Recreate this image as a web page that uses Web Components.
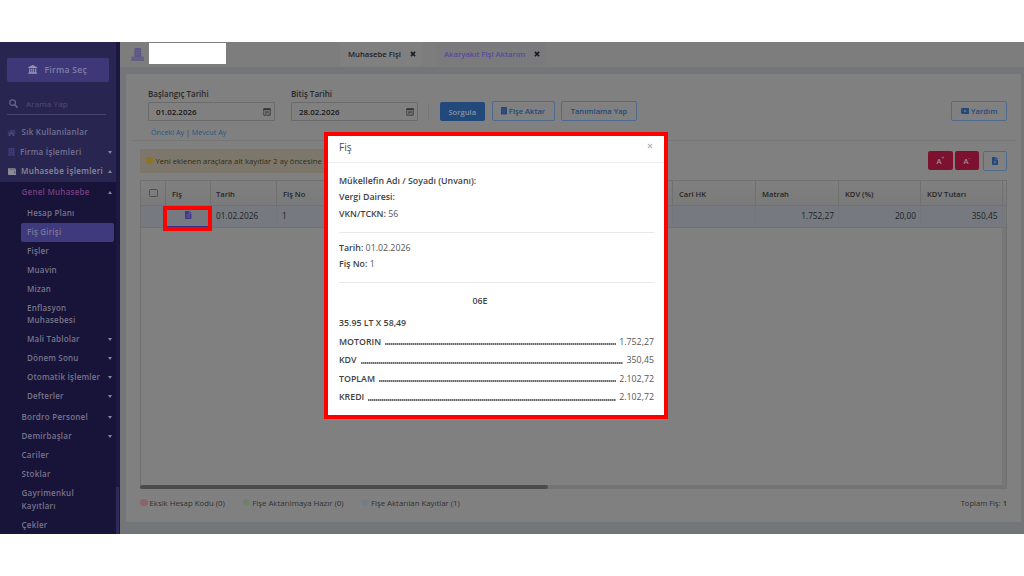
<!DOCTYPE html>
<html lang="tr">
<head>
<meta charset="utf-8">
<title>Akaryakıt Fişi Aktarım</title>
<style>
    * { box-sizing: border-box; }
    body {
        margin: 0;
        width: 1024px;
        height: 576px;
        overflow: hidden;
        background: #fff;
        font-family: "Open Sans", "Noto Sans", sans-serif;
        font-size: 7.5px;
        color: #262626;
    }
</style>
</head>
<body>
<fis-app></fis-app>

<script>
// Registers an element whose markup may depend on its attributes
function define(tag, render) {
    customElements.define(tag, class extends HTMLElement {
        constructor() {
            super();
            this.attachShadow({ mode: 'open' });
        }

        connectedCallback() {
            const template = document.createElement('template');
            template.innerHTML = '<style>* { box-sizing: border-box; }</style>' + render(this);
            this.shadowRoot.replaceChildren(template.content.cloneNode(true));
        }
    });
}

const icons = {
    bank: ['0 0 16 16', '<path d="M8 0 15.5 3.6V5H.5V3.6zM2 6h2v6h1.6V6h1.8v6h1.2V6h1.8v6H12V6h2v6h.7v1.3H1.3V12H2zM.4 14h15.2v1.6H.4z"/>'],
    search: ['0 0 16 16', '<circle cx="6.4" cy="6.4" r="5" fill="none" stroke="currentColor" stroke-width="2.2"/><path d="m10 10 5 5" stroke="currentColor" stroke-width="2.8" stroke-linecap="round"/>'],
    home: ['0 0 18 16', '<path d="m9 1 8.6 7.4-1.1 1.2L9 3.3 1.5 9.6.4 8.4zM13 1.6h2.2v4.2L13 4zM9 4.8l6 5V15h-4.3v-4H7.3v4H3V9.8z"/>'],
    building: ['0 0 14 16', '<path fill-rule="evenodd" d="M1 0h12v16H8.5v-3h-3v3H1zM3.5 2.5v1.8h2V2.5zM8.5 2.5v1.8h2V2.5zM3.5 6v1.8h2V6zM8.5 6v1.8h2V6zM3.5 9.5v1.8h2V9.5zM8.5 9.5v1.8h2V9.5z"/>'],
    wallet: ['0 0 16 14', '<path fill-rule="evenodd" d="M2 0h12v1.5H2.2v1H15a1 1 0 0 1 1 1V13a1 1 0 0 1-1 1H1.5A1.5 1.5 0 0 1 0 12.5V2a2 2 0 0 1 2-2zM12.8 7.2a1.1 1.1 0 1 0 .01 0z"/>'],
    city: ['0 0 16 16', '<path d="M4 1 5.500 0h5L12 1v10H4z"/><path d="M.8 10.500h14.400v3.500H.8zM0 14h16v2H0z" opacity=".75"/><path d="M5.500 3.200h5M5.500 5.600h5M5.500 8h5M3 12.200h2M7 12.200h2M11 12.200h2" stroke="#6b698a" stroke-width=".8"/>'],
    calendar: ['0 0 16 16', '<path d="M1.5 1.5h13v13h-13z" fill="none" stroke="currentColor" stroke-width="1.5"/><path d="M1 1h14v3H1z"/><path d="M4 6.500h8.500M4 9.200h8.500M4 11.800h4" stroke="currentColor" stroke-width="1.300" fill="none"/><path d="m10 14.500 4.500-4" stroke="currentColor"/>'],
    list: ['0 0 12 16', '<rect width="12" height="16" rx="1.5"/><path d="M2.5 4h7M2.5 7h7M2.5 10h7M2.5 13h7" stroke="#54647e" stroke-width=".8"/>'],
    doc: ['0 0 12 16', '<path d="M1.3 0H7v4.8h5v9.9a1.3 1.3 0 0 1-1.3 1.3H1.3A1.3 1.3 0 0 1 0 14.7V1.3A1.3 1.3 0 0 1 1.3 0zM8 0l4 3.8H8z"/><path d="M2.5 7.5h7M2.5 10h7M2.5 12.5h7" stroke="#73767f" stroke-width=".9"/>'],
    excel: ['0 0 12 16', '<path d="M1.3 0H7v4.8h5v9.9a1.3 1.3 0 0 1-1.3 1.3H1.3A1.3 1.3 0 0 1 0 14.7V1.3A1.3 1.3 0 0 1 1.3 0zM8 0l4 3.8H8z"/><path d="m4 7.5 4 5.5m0-5.500L4 13" stroke="#808080" stroke-width="1.3"/>'],
    video: ['0 0 18 13', '<rect width="18" height="13" rx="3"/><path d="m7 3.8 5 2.7-5 2.7z" fill="#808080"/>'],
    alert: ['0 0 16 16', '<circle cx="8" cy="8" r="8"/><path d="M7 3.5h2v5.7H7zM7 10.6h2v2H7z" fill="#7b776b"/>'],
    close: ['0 0 10 10', '<path d="m1.5 1.5 7 7m0-7-7 7" stroke="currentColor" stroke-width="2.6"/>'],
    thinclose: ['0 0 10 10', '<path d="m1.5 1.5 7 7m0-7-7 7" stroke="currentColor" stroke-width="1.9"/>']
};

define('fis-icon', el => {
    const [box, shape] = icons[el.getAttribute('name')];
    return `
        <style>
            :host { display: inline-flex; flex: none; }
            svg { width: 100%; height: 100%; fill: currentColor; display: block; }
        </style>
        <svg viewBox="${box}" preserveAspectRatio="none">${shape}</svg>`;
});

define('nav-item', el => `
    <style>
        :host {
            display: flex;
            align-items: center;
            min-height: 19px;
            padding: 0 4.5px 0 21.5px;
            line-height: 12.6px;
            font-size: 8px;
            letter-spacing: .25px;
            font-weight: 600;
            color: #77758a;
        }
        :host([level="0"]) { height: 19.5px; padding-left: 7px; color: #737190; }
        :host([level="2"]) { padding-left: 27px; letter-spacing: .2px; }
        :host([tall]) { height: 31.5px; }
        :host([current]) { color: #74407f; }
        :host([open]) { color: #8b8a98; letter-spacing: .36px; }
        :host([active]) {
            margin: 0 2px 0 20.5px;
            padding-left: 6.5px;
            border-radius: 2px;
            background: #3f397d;
            color: #7c7897;
        }
        .label { flex: 1; white-space: nowrap; }
        .arrow { width: 0; border: 2px solid transparent; }
        .down { border-top: 3.5px solid #85849a; border-bottom: 0; }
        .up { border-bottom: 3.5px solid #85849a; border-top: 0; }
    </style>
    <slot name="icon"></slot>
    <span class="label"><slot></slot></span>
    ${el.hasAttribute('arrow') ? `<span class="arrow ${el.getAttribute('arrow')}"></span>` : ''}
`);

define('side-nav', () => `
    <style>
        :host { display: flex; flex: none; width: 120px; background: #282651; overflow: hidden; }
        .menu { width: 116px; flex: none; }
        .head { height: 81px; padding: 15.5px 7px 0 6.5px; }
        .firm {
            height: 24px;
            border-radius: 2px;
            background: #3e3879;
            display: flex;
            align-items: center;
            justify-content: center;
            gap: 6.5px;
            color: #8380a5;
            font-size: 8.6px;
            font-weight: 600;
            letter-spacing: .3px;
        }
        .firm fis-icon { width: 9.5px; height: 9.5px; color: #9794ae; }
        .search {
            display: flex;
            align-items: center;
            gap: 8px;
            height: 21px;
            width: 99px;
            margin-top: 12px;
            padding-left: 2.5px;
            border-bottom: 1px solid #474570;
            color: #4f4c80;
            font-size: 8px;
            letter-spacing: .15px;
        }
        .search fis-icon { width: 9px; height: 9px; color: #64628f; }
        .group { background: #171339; padding-top: 1.5px; height: 360px; }
        .subs { padding: 1.5px 0 2px; }
        .home { width: 9px; height: 7.5px; margin-right: 5.5px; color: #494678; }
        .building { width: 7px; height: 8px; margin: 0 5px 0 1px; color: #403c78; }
        .wallet { width: 8.5px; height: 7px; margin: 0 5px 0 .5px; color: #8a8994; }
        .bar {
            width: 4px;
            flex: none;
            background: #1c1842;
            display: flex;
            flex-direction: column;
            justify-content: flex-end;
        }
        .bar i { height: 47px; width: 3px; background: #2e2957; }
    </style>
    <div class="menu">
        <div class="head">
            <div class="firm"><fis-icon name="bank"></fis-icon>Firma Seç</div>
            <div class="search"><fis-icon name="search"></fis-icon>Arama Yap</div>
        </div>
        <nav-item level="0"><fis-icon slot="icon" class="home" name="home"></fis-icon>Sık Kullanılanlar</nav-item>
        <nav-item level="0" arrow="down"><fis-icon slot="icon" class="building" name="building"></fis-icon>Firma İşlemleri</nav-item>
        <nav-item level="0" arrow="up" open><fis-icon slot="icon" class="wallet" name="wallet"></fis-icon>Muhasebe İşlemleri</nav-item>
        <div class="group">
            <nav-item arrow="up" current>Genel Muhasebe</nav-item>
            <div class="subs">
                <nav-item level="2">Hesap Planı</nav-item>
                <nav-item level="2" active>Fiş Girişi</nav-item>
                <nav-item level="2">Fişler</nav-item>
                <nav-item level="2">Muavin</nav-item>
                <nav-item level="2">Mizan</nav-item>
                <nav-item level="2" tall>Enflasyon<br>Muhasebesi</nav-item>
                <nav-item level="2" arrow="down">Mali Tablolar</nav-item>
                <nav-item level="2" arrow="down">Dönem Sonu</nav-item>
                <nav-item level="2" arrow="down">Otomatik İşlemler</nav-item>
                <nav-item level="2" arrow="down">Defterler</nav-item>
            </div>
            <nav-item arrow="down">Bordro Personel</nav-item>
            <nav-item arrow="down">Demirbaşlar</nav-item>
            <nav-item>Cariler</nav-item>
            <nav-item>Stoklar</nav-item>
            <nav-item tall>Gayrimenkul<br>Kayıtları</nav-item>
            <nav-item>Çekler</nav-item>
        </div>
    </div>
    <div class="bar"><i></i></div>
`);

define('page-tab', () => `
    <style>
        :host {
            display: flex;
            align-items: center;
            justify-content: space-between;
            padding: 0 6px 0 8px;
            background: #808080;
            color: #222;
            font-weight: 600;
            font-size: 7.7px;
            white-space: nowrap;
        }
        :host([active]) { background: #7b7b7e; color: #544b9c; }
        fis-icon { width: 6px; height: 6px; color: #161b24; }
    </style>
    <slot></slot><fis-icon name="close"></fis-icon>
`);

define('top-bar', () => `
    <style>
        :host { display: flex; height: 25px; background: #7d7d7d; padding-left: 10.5px; }
        .logo { width: 13.5px; height: 13px; margin-top: 6px; color: #5a5687; }
        .company { width: 77px; height: 21px; margin: 1px 114.5px 0 4.5px; background: #fff; }
        page-tab { height: 24px; }
        page-tab:nth-of-type(1) { width: 82px; }
        page-tab:nth-of-type(2) { width: 110px; margin-left: 14px; }
    </style>
    <fis-icon class="logo" name="city"></fis-icon>
    <div class="company"></div>
    <page-tab>Muhasebe Fişi</page-tab>
    <page-tab active>Akaryakıt Fişi Aktarım</page-tab>
`);

define('date-field', el => `
    <style>
        :host { display: block; width: 127px; }
        label { display: block; height: 17px; line-height: 17px; font-weight: 600; font-size: 8px; color: #292929; }
        .box {
            display: flex;
            align-items: center;
            justify-content: space-between;
            height: 19px;
            border: 1px solid #6b6b6b;
            border-radius: 1px;
            padding: 0 3px 0 7px;
            font-weight: 600;
            font-size: 7.9px;
            color: #171717;
        }
        fis-icon { width: 8px; height: 8px; color: #333; }
    </style>
    <label>${el.getAttribute('label')}</label>
    <div class="box"><slot></slot><fis-icon name="calendar"></fis-icon></div>
`);

define('ui-button', () => `
    <style>
        :host {
            display: flex;
            align-items: center;
            justify-content: center;
            gap: 2px;
            height: 20px;
            border: 1px solid #4e6a8e;
            border-radius: 2px;
            color: #24487a;
            font-size: 7.6px;
            font-weight: 600;
            white-space: nowrap;
        }
        :host([primary]) { height: 19px; border: 0; background: #23497b; color: #8793a5; }
        :host([danger]) { height: 18.5px; border: 0; background: #7d1230; color: #a58b94; gap: 0; }
    </style>
    <slot></slot>
`);

define('query-form', () => `
    <style>
        :host {
            display: flex;
            align-items: flex-end;
            height: 36px;
            margin: 11px 14px 0 22px;
        }
        date-field + date-field { margin-left: 16px; }
        .sep { width: 1px; height: 17px; margin: 0 11px 1px 10px; background: #777; }
        .list { width: 6px; height: 7.5px; }
        .video { width: 8.5px; height: 6px; }
        .query { width: 44.5px; }
        .send { width: 63px; margin-left: 7px; }
        .define { width: 76px; margin-left: 6.5px; }
        .help { width: 56px; margin-left: auto; }
    </style>
    <date-field label="Başlangıç Tarihi">01.02.2026</date-field>
    <date-field label="Bitiş Tarihi">28.02.2026</date-field>
    <span class="sep"></span>
    <ui-button class="query" primary>Sorgula</ui-button>
    <ui-button class="send"><fis-icon class="list" name="list"></fis-icon>Fişe Aktar</ui-button>
    <ui-button class="define">Tanımlama Yap</ui-button>
    <ui-button class="help"><fis-icon class="video" name="video"></fis-icon>Yardım</ui-button>
`);

define('notice-row', () => `
    <style>
        :host { display: flex; align-items: center; height: 25px; margin: 7px 14px 0; }
        .note {
            display: flex;
            align-items: center;
            gap: 2px;
            width: 400px;
            height: 24px;
            padding-left: 6px;
            background: #7c776a;
            color: #332c14;
            font-size: 7.7px;
            white-space: nowrap;
            overflow: hidden;
        }
        .note fis-icon { width: 7.5px; height: 7.5px; color: #8d7322; }
        .plus { width: 25px; margin-left: auto; }
        .minus { width: 23.5px; margin: 0 4.5px 0 2px; }
        .excel { width: 24px; }
        .excel fis-icon { width: 6px; height: 8px; }
        sup { font-size: 5px; line-height: 1; align-self: center; margin-top: -4px; }
    </style>
    <div class="note"><fis-icon name="alert"></fis-icon>Yeni eklenen araçlara ait kayıtlar 2 ay öncesine</div>
    <ui-button class="plus" danger>A<sup>+</sup></ui-button>
    <ui-button class="minus" danger>A<sup>-</sup></ui-button>
    <ui-button class="excel"><fis-icon name="excel"></fis-icon></ui-button>
`);

define('data-grid', () => `
    <style>
        :host {
            display: flex;
            flex-direction: column;
            height: 309px;
            margin: 7px 14px 0;
            border: 1px solid #707070;
            border-bottom: 0;
        }
        .row { display: grid; grid-template-columns: 25px 45px 66px 66px 110px 110px 110px 83px 83px 82px 81.5px 1fr; }
        .row > * { display: flex; align-items: center; border-right: 1px solid #707070; padding: 0 5px; white-space: nowrap; }
        .row > :last-child { border-right: 0; }
        .head { height: 25px; background: linear-gradient(#808080, #7a7a7a); border-bottom: 1px solid #707070; font-weight: 600; font-size: 7.6px; }
        .head > * { padding: 2px 6px 0; }
        .head > :first-child { padding-top: 0; }
        .head > :nth-child(3) { padding-left: 5px; }
        .data { height: 21.5px; background: #767a80; border-bottom: 1px solid #707276; font-size: 8.3px; color: #202225; padding-bottom: 2px; }
        .data > * { border-right-color: #72757a; }
        .num { justify-content: flex-end; padding-right: 4px; }
        .check { width: 8.5px; height: 8.5px; border: 1px solid #4d4d4d; border-radius: 1.5px; margin: 0 0 0 2px; }
        .cell { position: relative; justify-content: center; }
        .cell fis-icon { width: 6.5px; height: 8px; color: #3f378c; margin-left: 1px; }
        /* red frame drawn over the icon cell */
        .mark { position: absolute; left: -3px; top: 0; width: 49px; height: 25px; border: 4px solid #f00; }
        .mark::after { content: ""; display: block; height: 1px; margin-top: 16px; background: #35318a; }
        .body { flex: 1; display: flex; justify-content: flex-end; }
        .vtrack { width: 4px; background: #777; }
        .track { height: 4.5px; margin: 0 -1px; background: #747474; }
        .thumb { height: 4px; width: 408px; border-radius: 2px; background: #4b4b4b; }
    </style>
    <div class="row head">
        <div><span class="check"></span></div>
        <div>Fiş</div><div>Tarih</div><div>Fiş No</div><div></div><div></div><div></div>
        <div>Cari HK</div><div>Matrah</div><div>KDV (%)</div><div>KDV Tutarı</div><div></div>
    </div>
    <div class="row data">
        <div></div>
        <div class="cell"><fis-icon name="doc"></fis-icon><span class="mark"></span></div>
        <div>01.02.2026</div><div>1</div><div></div><div></div><div></div><div></div>
        <div class="num">1.752,27</div><div class="num">20,00</div><div class="num">350,45</div><div></div>
    </div>
    <div class="body"><div class="vtrack"></div></div>
    <div class="track"><div class="thumb"></div></div>
`);

define('status-legend', () => `
    <style>
        :host { display: flex; align-items: center; height: 27px; margin: 0 14px; font-size: 7.8px; color: #303030; }
        span { display: flex; align-items: center; gap: 2px; margin-right: 18px; white-space: nowrap; }
        i { width: 7.5px; height: 7.5px; border-radius: 50%; }
        .total { margin: 0 0 0 auto; font-size: 7.6px; }
        b { font-weight: 600; }
    </style>
    <span><i style="background:#8b6469"></i>Eksik Hesap Kodu (0)</span>
    <span><i style="background:#718068"></i>Fişe Aktarılmaya Hazır (0)</span>
    <span><i style="background:#747c88"></i>Fişe Aktarılan Kayıtlar (1)</span>
    <span class="total">Toplam Fiş: <b>1</b></span>
`);

define('transfer-page', () => `
    <style>
        :host { display: flow-root; height: 448px; margin: 7px 3px 0 6px; background: #808080; border-radius: 1px; }
        .months {
            height: 20px;
            line-height: 23px;
            padding-left: 20px;
            margin: 0 5px;
            border-bottom: 1px solid #777;
            font-size: 7.2px;
            color: #245686;
        }
        .months i { font-style: normal; color: #333; }
    </style>
    <query-form></query-form>
    <div class="months">Önceki Ay <i>|</i> Mevcut Ay</div>
    <notice-row></notice-row>
    <data-grid></data-grid>
    <status-legend></status-legend>
`);

define('receipt-line', el => `
    <style>
        :host { display: flex; align-items: center; height: 18.5px; font-size: 8.8px; color: #555; }
        b { font-weight: 600; color: #3f3f3f; }
        .dots { flex: 1; height: 2px; margin: 5px 3.5px 0 4px; background: repeating-linear-gradient(90deg, #6a6a6a 0 1px, #a8a8a8 1px 2px); }
    </style>
    <b>${el.getAttribute('label')}</b><span class="dots"></span><slot></slot>
`);

define('fis-dialog', () => `
    <style>
        :host {
            display: block;
            position: absolute;
            left: 324px;
            top: 132px;
            width: 344px;
            height: 287px;
            border: 4px solid #f00;
            background: #fff;
            font-size: 8.8px;
            color: #555;
        }
        header {
            display: flex;
            justify-content: space-between;
            align-items: center;
            height: 27px;
            padding: 0 11.5px 4px 11px;
            border-bottom: 1px solid #ededed;
            font-size: 10.2px;
            color: #4c4c4c;
        }
        header fis-icon { width: 6px; height: 6px; color: #b4b4b4; margin-top: -2px; }
        section { margin: 0 10px 0 11px; border-bottom: 1px solid #e8e8e8; line-height: 16.4px; }
        .payer { padding: 10px 0 9.5px; }
        .slip { padding: 7px 0 9px; }
        .lines { border: 0; }
        b { font-weight: 600; color: #3f3f3f; }
        .plate { height: 36px; line-height: 36px; padding-left: 133.5px; }
        .amount { height: 14px; line-height: 8px; }
    </style>
    <header>Fiş<fis-icon name="thinclose"></fis-icon></header>
    <section class="payer">
        <b>Mükellefin Adı / Soyadı (Unvanı):</b><br>
        <b>Vergi Dairesi:</b><br>
        <b>VKN/TCKN:</b> 56
    </section>
    <section class="slip">
        <b>Tarih:</b> 01.02.2026<br>
        <b>Fiş No:</b> 1
    </section>
    <section class="lines">
        <div class="plate"><b>06E</b></div>
        <div class="amount"><b>35.95 LT X 58,49</b></div>
        <receipt-line label="MOTORIN">1.752,27</receipt-line>
        <receipt-line label="KDV">350,45</receipt-line>
        <receipt-line label="TOPLAM">2.102,72</receipt-line>
        <receipt-line label="KREDI">2.102,72</receipt-line>
    </section>
`);

define('fis-app', () => `
    <style>
        :host { display: block; padding-top: 42px; }
        .frame { display: flex; height: 491.5px; background: #747579; overflow: hidden; }
        main { flex: 1; min-width: 0; }
    </style>
    <div class="frame">
        <side-nav></side-nav>
        <main>
            <top-bar></top-bar>
            <transfer-page></transfer-page>
        </main>
    </div>
    <fis-dialog></fis-dialog>
`);
</script>
</body>
</html>
